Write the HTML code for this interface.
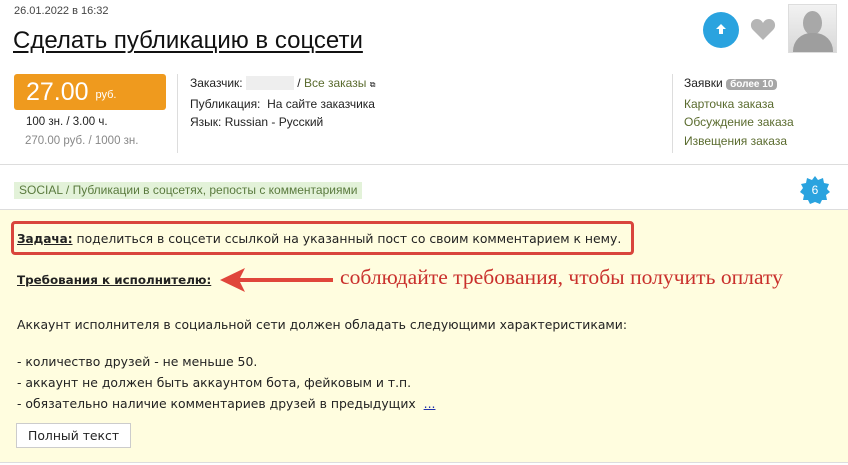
<!DOCTYPE html>
<html><head><meta charset="utf-8"><style>
*{margin:0;padding:0;box-sizing:border-box}
body{width:848px;height:465px;background:#fff;font-family:"Liberation Sans",sans-serif;color:#222;position:relative;overflow:hidden;font-size:12px}
.a{position:absolute;white-space:nowrap}
.g{color:#5a6b2e}
.d{font-family:"DejaVu Sans",sans-serif;font-size:12.4px}
</style></head><body>
<div class="a" style="left:14px;top:5px;font-size:11px;color:#444">26.01.2022 в 16:32</div>
<div class="a" style="left:13px;top:27px;font-size:24px;color:#111;text-decoration:underline;text-decoration-thickness:2px;text-underline-offset:3px">Сделать публикацию в соцсети</div>
<div class="a" style="left:14px;top:74px;width:152px;height:36px;background:#ef9a1e;border-radius:3px"></div>
<div class="a" style="left:26px;top:78px;font-size:25px;color:#fff">27.00 <span style="font-size:11px;vertical-align:2px">руб.</span></div>
<div class="a" style="left:26px;top:116px;font-size:11.5px">100 зн. / 3.00 ч.</div>
<div class="a" style="left:25px;top:135px;font-size:11.5px;color:#888">270.00 руб. / 1000 зн.</div>
<div class="a" style="left:177px;top:74px;width:1px;height:79px;background:#ddd"></div>
<div class="a" style="left:190px;top:74px;font-size:12px;line-height:18.5px">Заказчик: <span style="display:inline-block;width:48px;height:14px;background:#eee;vertical-align:-3px"></span> / <span class="g">Все заказы</span> <span style="font-size:8px">⧉</span><br>Публикация:&nbsp; На сайте заказчика<br>Язык: Russian - Русский</div>
<div class="a" style="left:703px;top:12px;width:36px;height:36px;border-radius:50%;background:#2aa3df"></div>
<svg class="a" style="left:713px;top:21px" width="16" height="16" viewBox="0 0 16 16"><path d="M8 3 L13 8 H10 V13 H6 V8 H3Z" fill="#fff"/></svg>
<svg class="a" style="left:750px;top:17px" width="26" height="24" viewBox="0 0 26 24"><path d="M13 23 L3 13 C-1 9 1 2 7 2 C10 2 12 4 13 6 C14 4 16 2 19 2 C25 2 27 9 23 13Z" fill="#b5b5b5"/></svg>
<div class="a" style="left:788px;top:4px;width:49px;height:49px;border:1px solid #ddd;background:linear-gradient(#f2f2f2,#d8d8d8);overflow:hidden">
<div style="position:absolute;left:14px;top:6px;width:19px;height:24px;border-radius:50%;background:#a8a8a8"></div>
<div style="position:absolute;left:4px;top:28px;width:40px;height:22px;border-radius:18px 18px 0 0;background:#9e9e9e"></div></div>
<div class="a" style="left:672px;top:74px;width:1px;height:79px;background:#ddd"></div>
<div class="a" style="left:684px;top:74px;font-size:12px;line-height:18.5px">Заявки <span style="background:#a6a6a6;color:#fff;border-radius:4px;padding:0 4px;font-size:10px;font-weight:bold">более 10</span><br><span class="g">Карточка заказа<br>Обсуждение заказа<br>Извещения заказа</span></div>
<div class="a" style="left:0;top:164px;width:848px;height:1px;background:#ddd"></div>
<div class="a" style="left:14px;top:182px;height:17px;background:#e3f2d9;color:#5a7a3e;font-size:12px;padding:1px 5px 0">SOCIAL / Публикации в соцсетях, репосты с комментариями</div>
<svg class="a" style="left:800px;top:175px" width="30" height="30" viewBox="0 0 30 30"><polygon fill="#2aa3df" points="15,1 18,5 23,3 24,8 29,9 27,14 30,17 26,20 27,25 22,25 20,29 15,27 10,29 8,25 3,25 4,20 0,17 3,13 1,9 6,8 7,3 12,5"/><text x="15" y="19" fill="#fff" font-size="12" text-anchor="middle" font-family="Liberation Sans">6</text></svg>
<div class="a" style="left:0;top:209px;width:848px;height:1px;background:#ddd"></div>
<div class="a" style="left:0;top:210px;width:848px;height:252px;background:#fffddf"></div>
<div class="a" style="left:0;top:462px;width:848px;height:1px;background:#ddd"></div>
<div class="a" style="left:11px;top:221px;width:623px;height:34px;border:3px solid #d9453c;border-radius:4px"></div>
<div class="a d" style="left:17px;top:231px"><b style="text-decoration:underline;font-size:12px">Задача:</b> поделиться в соцсети ссылкой на указанный пост со своим комментарием к нему.</div>
<div class="a d" style="left:17px;top:273px;font-weight:bold;text-decoration:underline;font-size:11.9px">Требования к исполнителю:</div>
<svg class="a" style="left:218px;top:265px" width="120" height="30" viewBox="0 0 120 30"><path d="M2 15 L27 3 L22 13 L115 13 L115 17 L22 17 L27 27Z" fill="#e0463b"/></svg>
<div class="a" style="left:340px;top:265px;font-family:'Liberation Serif',serif;font-size:21.6px;color:#c9302c">соблюдайте требования, чтобы получить оплату</div>
<div class="a d" style="left:17px;top:314px;line-height:21px">Аккаунт исполнителя в социальной сети должен обладать следующими характеристиками:</div>
<div class="a d" style="left:17px;top:351px;line-height:21px">- количество друзей - не меньше 50.<br>- аккаунт не должен быть аккаунтом бота, фейковым и т.п.<br>- обязательно наличие комментариев друзей в предыдущих&nbsp; <span style="color:#2233aa;text-decoration:underline">...</span></div>
<div class="a d" style="left:16px;top:423px;width:115px;height:25px;border:1px solid #ccc;background:#fff;padding:4px 0 0 11px">Полный текст</div>
</body></html>
